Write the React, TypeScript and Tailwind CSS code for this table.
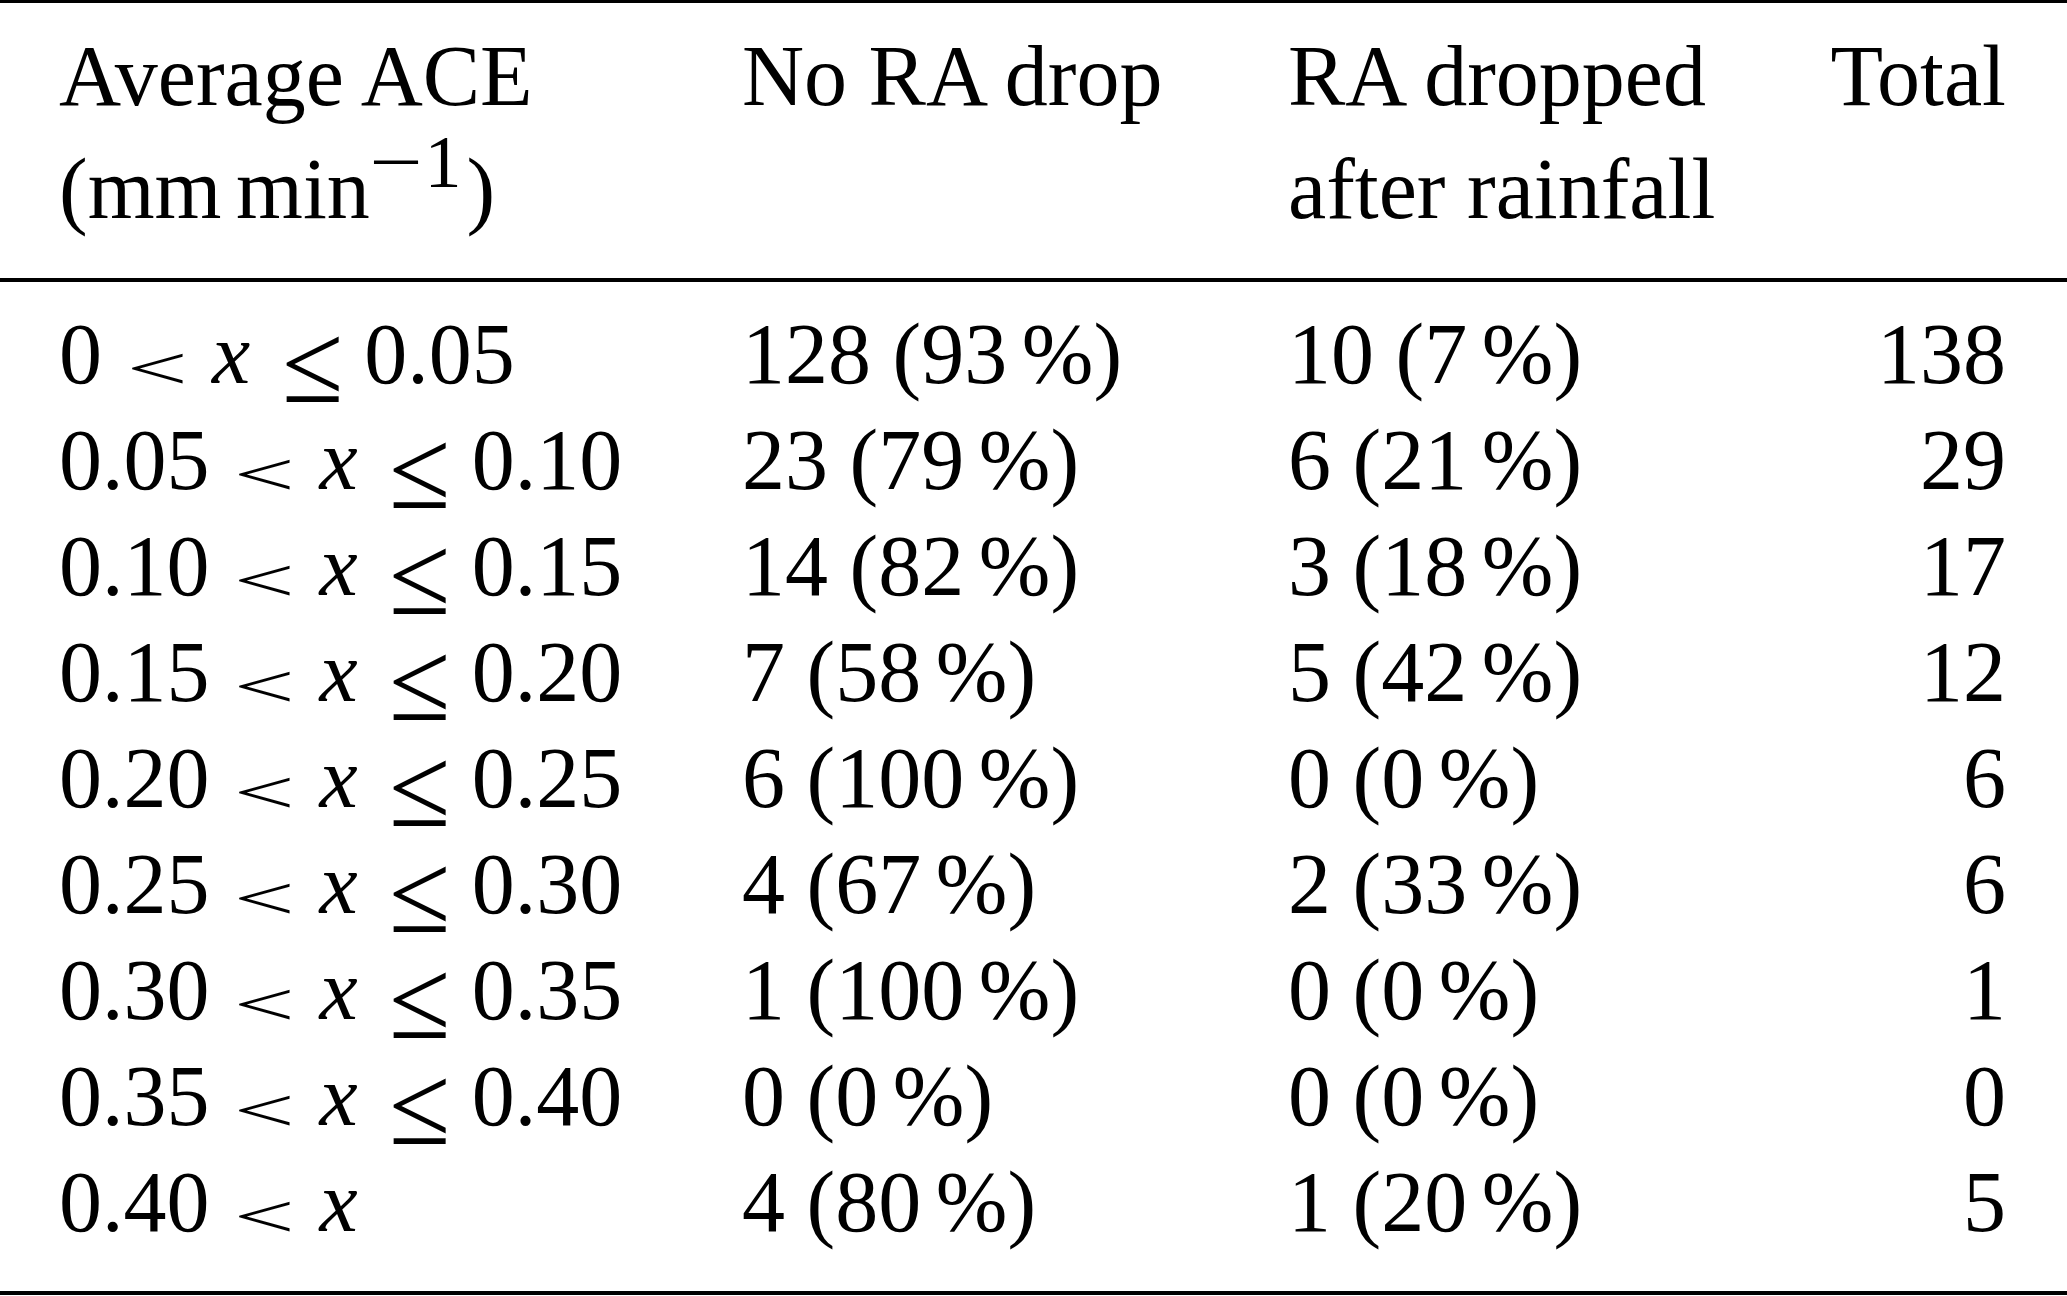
const rows = [
  { lo: "0", hi: "0.05", a: "128", ap: "93", b: "10", bp: "7", t: "138" },
  { lo: "0.05", hi: "0.10", a: "23", ap: "79", b: "6", bp: "21", t: "29" },
  { lo: "0.10", hi: "0.15", a: "14", ap: "82", b: "3", bp: "18", t: "17" },
  { lo: "0.15", hi: "0.20", a: "7", ap: "58", b: "5", bp: "42", t: "12" },
  { lo: "0.20", hi: "0.25", a: "6", ap: "100", b: "0", bp: "0", t: "6" },
  { lo: "0.25", hi: "0.30", a: "4", ap: "67", b: "2", bp: "33", t: "6" },
  { lo: "0.30", hi: "0.35", a: "1", ap: "100", b: "0", bp: "0", t: "1" },
  { lo: "0.35", hi: "0.40", a: "0", ap: "0", b: "0", bp: "0", t: "0" },
  { lo: "0.40", hi: null, a: "4", ap: "80", b: "1", bp: "20", t: "5" },
];

// math relations: wider/flatter than the text glyphs, scaled about the baseline
function Less() {
  return (
    <span className="inline-block w-[110px] text-center">
      <span className="relative top-[6px] inline-block leading-none scale-x-[1.26] scale-y-[0.71] origin-[50%_72px]">
        &lt;
      </span>
    </span>
  );
}

function LessEq() {
  return (
    <span className="inline-block w-[114px] pl-[10px] text-center">
      <span className="relative top-[19px] inline-block leading-none scale-x-[1.3] scale-y-[1.33] origin-[50%_72px]">
        ≤
      </span>
    </span>
  );
}

function Range({ lo, hi }: { lo: string; hi: string | null }) {
  return (
    <span>
      {lo}
      <Less />
      <i>x</i>
      {hi && (
        <>
          <LessEq />
          {hi}
        </>
      )}
    </span>
  );
}

function Count({ n, p }: { n: string; p: string }) {
  return (
    <span>
      {n} ({p}
      <span className="ml-[0.17em]">%</span>)
    </span>
  );
}

export default function App() {
  return (
    <div
      className="w-[2067px] h-[1296px] bg-white text-black text-[86px]"
      style={{ fontFamily: '"Liberation Serif", "Times New Roman", serif' }}
    >
      <div className="h-[3px] bg-black" />
      <div className="grid grid-cols-[683px_546px_1fr_auto] pl-[59px] pr-[61px] pt-[17px] pb-[32px] leading-[113px]">
        <div>
          <div>Average ACE</div>
          <div className="whitespace-nowrap">
            (mm<span className="ml-[0.17em]">min</span>
            <span className="relative -top-[31px] ml-[5px] text-[74px] leading-none">
              <span className="inline-block scale-x-[1.28]">−</span>
              <span className="ml-[8px]">1</span>
            </span>
            <span className="ml-[5px]">)</span>
          </div>
        </div>
        <div>No RA drop</div>
        <div>
          <div>RA dropped</div>
          <div>after rainfall</div>
        </div>
        <div className="text-right">Total</div>
      </div>
      <div className="h-[4px] bg-black" />
      <div className="grid grid-cols-[683px_546px_1fr_auto] pl-[59px] pr-[61px] pt-[19px] pb-[36px] leading-[106px]">
        {rows.map((r, i) => (
          <div key={i} className="contents">
            <div className="whitespace-nowrap">
              <Range lo={r.lo} hi={r.hi} />
            </div>
            <div className="whitespace-nowrap">
              <Count n={r.a} p={r.ap} />
            </div>
            <div className="whitespace-nowrap">
              <Count n={r.b} p={r.bp} />
            </div>
            <div className="text-right">{r.t}</div>
          </div>
        ))}
      </div>
      <div className="h-[4px] bg-black" />
    </div>
  );
}
